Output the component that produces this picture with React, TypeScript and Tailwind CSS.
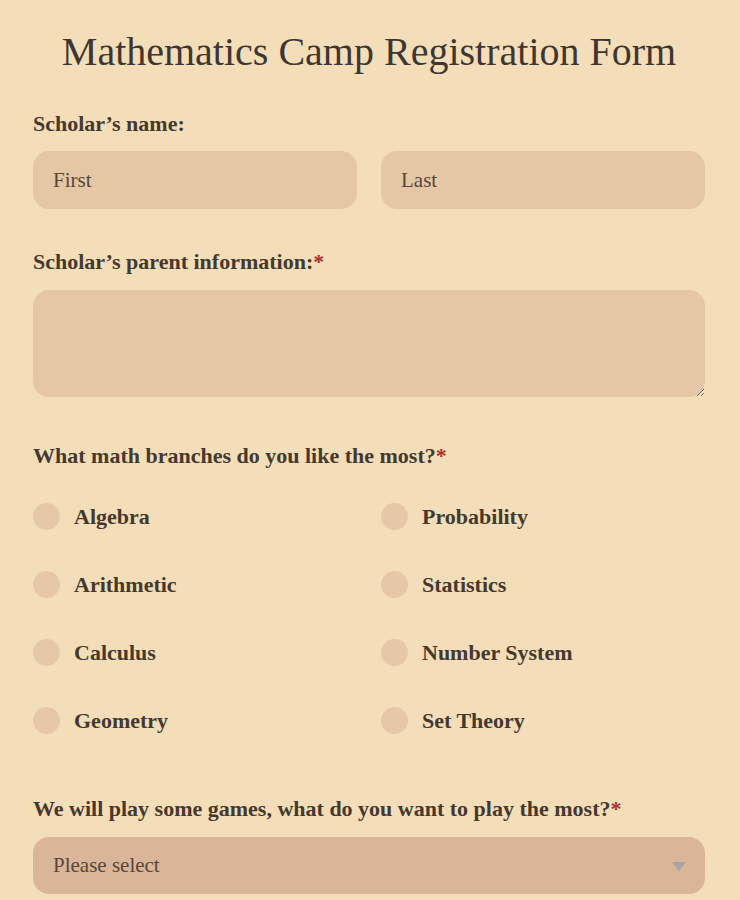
import React from "react";

const branches = [
  ["Algebra", "Probability"],
  ["Arithmetic", "Statistics"],
  ["Calculus", "Number System"],
  ["Geometry", "Set Theory"],
];

function Radio({ label }: { label: string }) {
  return (
    <label className="flex items-center h-[27px] gap-[14px] cursor-pointer">
      <span className="w-[27px] h-[27px] rounded-full bg-[#e6c8a9] shrink-0" />
      <span className="text-[22px] leading-[24px] font-bold text-[#45392f]">{label}</span>
    </label>
  );
}

function Req() {
  return <span className="text-[#a8322d]">*</span>;
}

export default function App() {
  return (
    <div
      className="min-h-screen w-full bg-[#f4deb9] text-[#45392f]"
      style={{ fontFamily: '"Liberation Serif", "Times New Roman", serif' }}
    >
      <div className="w-[672px] ml-[33px] pt-[28px] pb-10">
        <h1 className="text-center text-[40px] leading-[48px] font-normal text-[#3f3631]">
          Mathematics Camp Registration Form
        </h1>

        <div className="mt-[36px] text-[22px] leading-[24px] font-bold">Scholar’s name:</div>
        <div className="mt-[15px] grid grid-cols-2 gap-x-6">
          <input
            placeholder="First"
            className="h-[58px] rounded-[16px] bg-[#e5c7a6] px-5 text-[21px] outline-none placeholder:text-[#57473b] text-[#45392f]"
          />
          <input
            placeholder="Last"
            className="h-[58px] rounded-[16px] bg-[#e5c7a6] px-5 text-[21px] outline-none placeholder:text-[#57473b] text-[#45392f]"
          />
        </div>

        <div className="mt-[41px] text-[22px] leading-[24px] font-bold">
          Scholar’s parent information:<Req />
        </div>
        <textarea className="mt-[16px] block w-full h-[107px] rounded-[16px] bg-[#e5c7a6] px-5 py-3 text-[21px] outline-none" />

        <div className="mt-[47px] text-[22px] leading-[24px] font-bold">
          What math branches do you like the most?<Req />
        </div>
        <div className="mt-[35px] grid grid-cols-2 gap-x-6 gap-y-[41px]">
          {branches.map(([a, b]) => (
            <React.Fragment key={a}>
              <Radio label={a} />
              <Radio label={b} />
            </React.Fragment>
          ))}
        </div>

        <div className="mt-[63px] text-[22px] leading-[24px] font-bold">
          We will play some games, what do you want to play the most?<Req />
        </div>
        <div className="relative mt-[16px]">
          <select className="appearance-none block w-full h-[57px] rounded-[16px] bg-[#dab597] pl-5 pr-12 text-[21px] text-[#57473b] outline-none">
            <option>Please select</option>
          </select>
          <span className="pointer-events-none absolute right-[19px] top-[25px] w-0 h-0 border-l-[7px] border-r-[7px] border-t-[9px] border-l-transparent border-r-transparent border-t-[#a8a4a8]" />
        </div>
      </div>
    </div>
  );
}
